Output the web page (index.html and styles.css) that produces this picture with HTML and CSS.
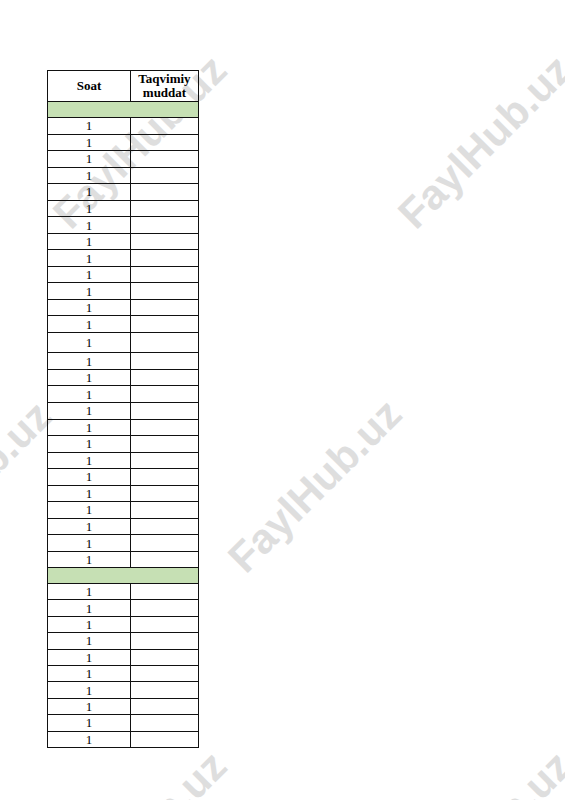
FILE: index.html
```html
<!DOCTYPE html>
<html lang="uz">
<head>
<meta charset="utf-8">
<title>Soat</title>
<link rel="stylesheet" href="styles.css">
</head>
<body>
<div class="page">
  <div class="watermarks" aria-hidden="true">
    <span class="wm wm-a">FaylHub.uz</span>
    <span class="wm wm-b">FaylHub.uz</span>
    <span class="wm wm-c">FaylHub.uz</span>
    <span class="wm wm-d">FaylHub.uz</span>
    <span class="wm wm-e">FaylHub.uz</span>
    <span class="wm wm-f">FaylHub.uz</span>
  </div>
  <table class="sheet">
    <thead>
      <tr class="head"><th>Soat</th><th>Taqvimiy<br>muddat</th></tr>
    </thead>
    <tbody>
      <tr class="band"><td colspan="2"></td></tr>
      <tr><td>1</td><td></td></tr>
      <tr><td>1</td><td></td></tr>
      <tr><td>1</td><td></td></tr>
      <tr><td>1</td><td></td></tr>
      <tr><td>1</td><td></td></tr>
      <tr><td>1</td><td></td></tr>
      <tr><td>1</td><td></td></tr>
      <tr><td>1</td><td></td></tr>
      <tr><td>1</td><td></td></tr>
      <tr><td>1</td><td></td></tr>
      <tr><td>1</td><td></td></tr>
      <tr><td>1</td><td></td></tr>
      <tr><td>1</td><td></td></tr>
      <tr class="tall"><td>1</td><td></td></tr>
      <tr><td>1</td><td></td></tr>
      <tr><td>1</td><td></td></tr>
      <tr><td>1</td><td></td></tr>
      <tr><td>1</td><td></td></tr>
      <tr><td>1</td><td></td></tr>
      <tr><td>1</td><td></td></tr>
      <tr><td>1</td><td></td></tr>
      <tr><td>1</td><td></td></tr>
      <tr><td>1</td><td></td></tr>
      <tr><td>1</td><td></td></tr>
      <tr><td>1</td><td></td></tr>
      <tr><td>1</td><td></td></tr>
      <tr><td>1</td><td></td></tr>
      <tr class="band"><td colspan="2"></td></tr>
      <tr class="short"><td>1</td><td></td></tr>
      <tr class="short"><td>1</td><td></td></tr>
      <tr class="short"><td>1</td><td></td></tr>
      <tr class="short"><td>1</td><td></td></tr>
      <tr class="short"><td>1</td><td></td></tr>
      <tr class="short"><td>1</td><td></td></tr>
      <tr class="short"><td>1</td><td></td></tr>
      <tr class="short"><td>1</td><td></td></tr>
      <tr class="short"><td>1</td><td></td></tr>
      <tr class="short"><td>1</td><td></td></tr>
    </tbody>
  </table>
</div>
</body>
</html>
```
FILE: styles.css
```css
html, body {
  margin: 0;
  padding: 0;
  background: #fff;
}
body {
  overflow: hidden;
}
.page {
  position: relative;
  width: 565px;
  height: 800px;
  overflow: hidden;
  padding: 70px 0 0 47px;
  box-sizing: border-box;
}
.watermarks {
  position: absolute;
  inset: 0;
  z-index: 0;
}
.wm {
  position: absolute;
  font-family: "Liberation Sans", Arial, sans-serif;
  font-weight: bold;
  font-size: 42px;
  line-height: 1;
  color: #dedede;
  white-space: nowrap;
  transform: translate(-50%, -50%) rotate(-45deg);
}
.wm-a { left: 140px; top: 142px; }
.wm-b { left: 485px; top: 142px; }
.wm-c { left: -35px; top: 488px; }
.wm-d { left: 315px; top: 486px; }
.wm-e { left: 140px; top: 838px; }
.wm-f { left: 485px; top: 838px; }

.sheet {
  position: relative;
  z-index: 1;
  border-collapse: collapse;
  font-family: "Liberation Serif", "Times New Roman", serif;
  font-size: 13px;
  color: #000;
  table-layout: fixed;
  width: 152px;
}
.sheet th, .sheet td {
  border: 1px solid #111;
  padding: 0;
  text-align: center;
  vertical-align: middle;
  line-height: 13px;
}
.sheet th:first-child, .sheet td:first-child {
  width: 82px;
}
.sheet th {
  font-weight: bold;
  line-height: 14px;
}
.sheet tr {
  height: 16.54px;
}
.sheet tr.head {
  height: 31.3px;
}
.sheet tr.band {
  height: 15.8px;
}
.band td {
  background: #c6e0b4;
}
.sheet tr.tall {
  height: 20.4px;
}
.sheet tr.short {
  height: 16.4px;
}
```
